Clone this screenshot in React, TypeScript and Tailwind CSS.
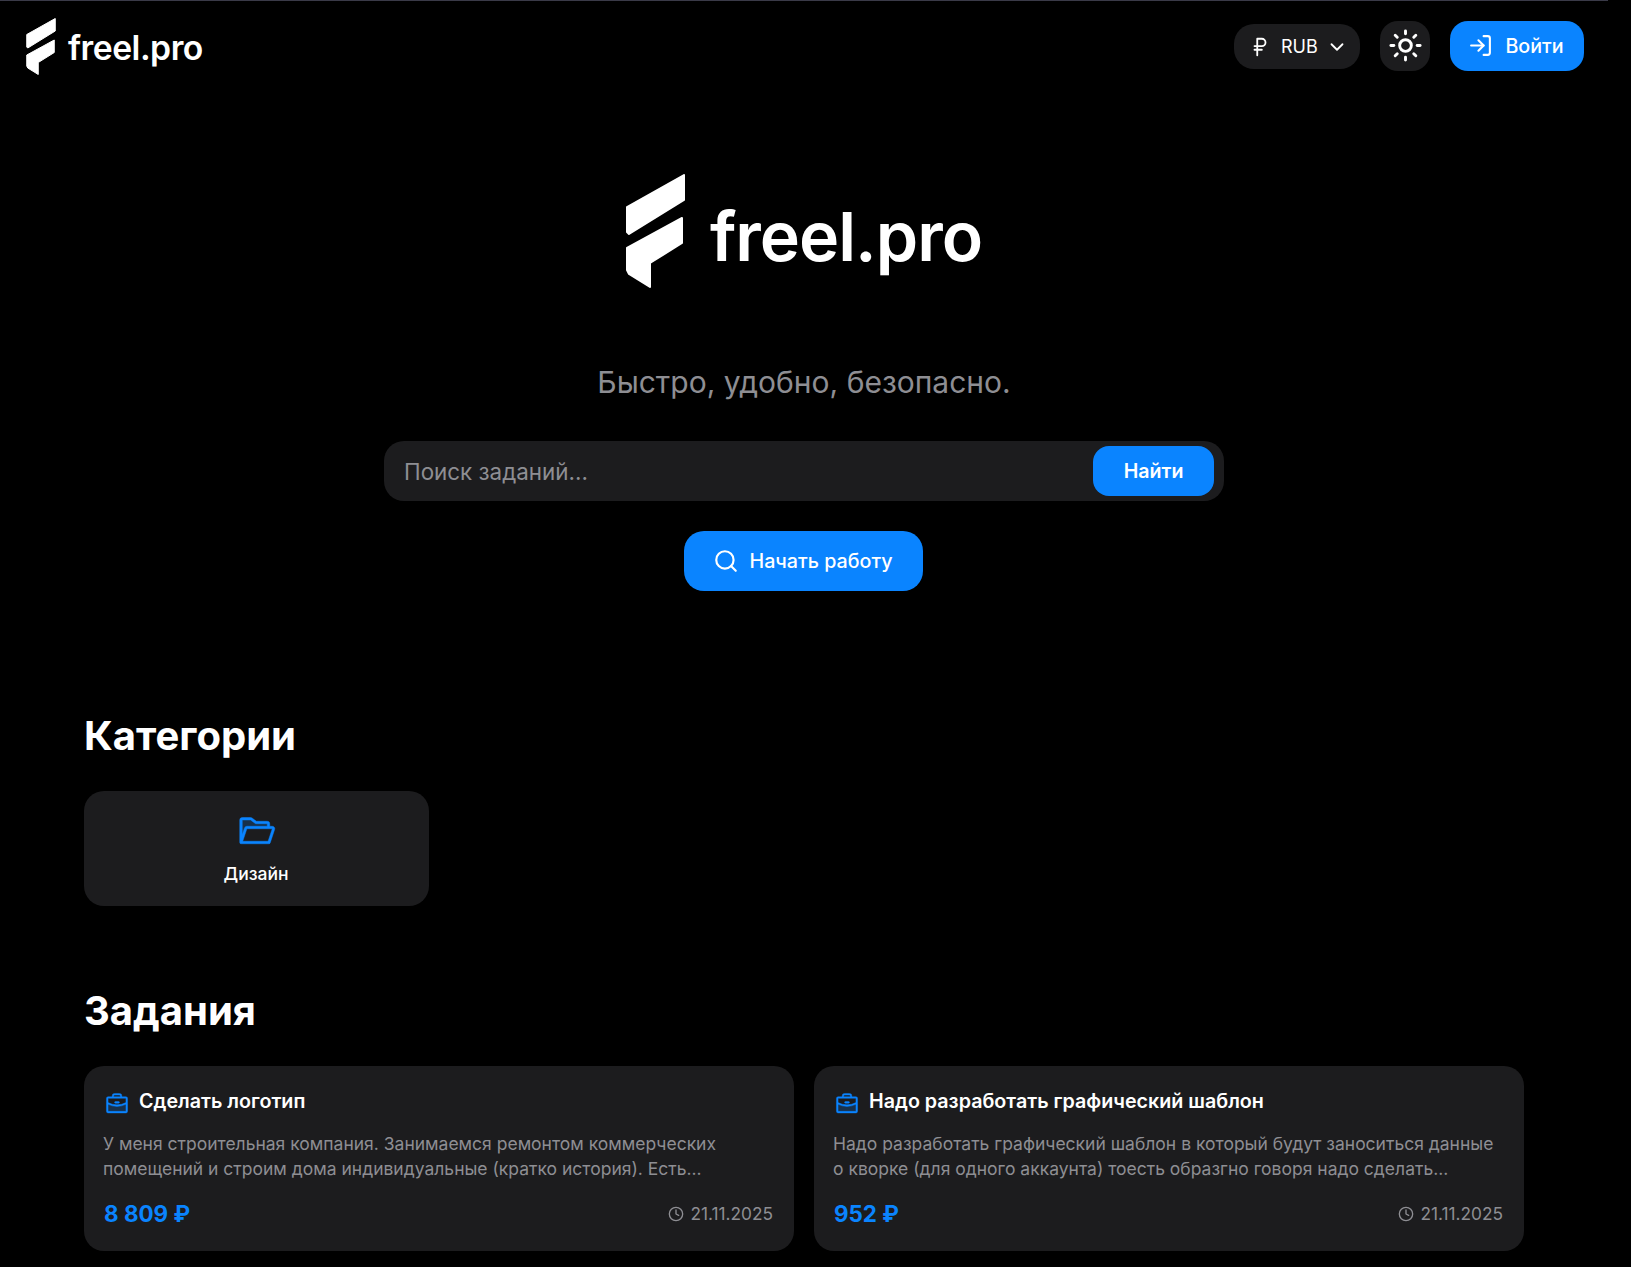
import { RussianRuble, ChevronDown, Sun, LogIn, Search, Clock } from "lucide-react";
import { PiFolderOpenDuotone, PiBriefcaseDuotone } from "react-icons/pi";

const tasks = [
  {
    title: "Сделать логотип",
    text: "У меня строительная компания. Занимаемся ремонтом коммерческих помещений и строим дома индивидуальные (кратко история). Есть...",
    price: "8 809 ₽",
    date: "21.11.2025",
  },
  {
    title: "Надо разработать графический шаблон",
    text: "Надо разработать графический шаблон в который будут заноситься данные о кворке (для одного аккаунта) тоесть образгно говоря надо сделать...",
    price: "952 ₽",
    date: "21.11.2025",
  },
];

function LogoMark({ className }: { className: string }) {
  return (
    <svg viewBox="0 0 59 114" className={className} fill="white" stroke="white" strokeWidth="2" strokeLinejoin="round">
      <path d="M1 33 L58 1 V26 L3 60 L1 58 Z" />
      <path d="M1 74 L56 44 V69 L24 89 V113 L3 100 L1 96 Z" />
    </svg>
  );
}

export default function App() {
  return (
    <div className="h-screen overflow-hidden bg-black font-['Inter',sans-serif] text-white">
      <div className="w-[1608px]">
        {/* Header */}
        <header className="flex h-[90px] items-center justify-between border-t border-[#3a3a48] pl-[26px] pr-6">
          <a className="mt-[2px] flex items-center gap-[12px]">
            <LogoMark className="h-[57px] w-[30px]" />
            <span className="mt-[2px] text-[33.7px] font-semibold leading-none tracking-[-0.5px]">freel.pro</span>
          </a>

          <div className="flex items-center gap-5">
            <button className="mt-[2px] flex h-[45px] w-[126px] items-center rounded-[20px] bg-[#1c1c1e] pl-[15px] text-lg">
              <RussianRuble size={22} />
              <span className="ml-[10px]">RUB</span>
              <ChevronDown size={22} className="ml-[8px]" />
            </button>
            <button className="flex h-[50px] w-[50px] items-center justify-center rounded-[18px] bg-[#1c1c1e]">
              <Sun size={35} />
            </button>
            <button className="flex h-[50px] w-[134px] items-center justify-center gap-3 rounded-[18px] bg-[#0a84ff] pr-[2px] text-[19.7px] font-medium">
              <LogIn size={25} />
              <span className="mt-[2px]">Войти</span>
            </button>
          </div>
        </header>

        {/* Hero */}
        <section className="flex flex-col items-center pt-[83px]">
          <div className="flex h-[116px] items-center gap-[25px]">
            <LogoMark className="h-[114px] w-[59px]" />
            <span className="mt-[10px] text-[68px] font-semibold leading-none tracking-[-1px]">freel.pro</span>
          </div>

          <p className="mt-[75px] text-[30px] leading-9 text-[#8e8e93]">Быстро, удобно, безопасно.</p>

          <div className="mt-[41px] flex h-[60px] w-[840px] items-center justify-between rounded-[20px] bg-[#1c1c1e] pl-5 pr-[10px]">
            <span className="mt-[1px] text-[22.4px] text-[#8e8e93]">Поиск заданий...</span>
            <button className="h-[50px] w-[121px] rounded-[16px] bg-[#0a84ff] pt-[1px] text-[19.6px] font-semibold">Найти</button>
          </div>

          <button className="mr-[2px] mt-[30px] flex h-[60px] w-[239px] items-center justify-center gap-[10px] rounded-[20px] bg-[#0a84ff] text-[19.7px] font-medium">
            <Search size={26} />
            <span className="mt-[1px]">Начать работу</span>
          </button>
        </section>

        <main className="px-[84px]">
          {/* Categories */}
          <h2 className="mt-[121px] text-[40px] font-bold leading-12">Категории</h2>
          <div className="mt-[31px] flex h-[115px] w-[345px] flex-col items-center justify-center rounded-[20px] bg-[#1c1c1e]">
            <PiFolderOpenDuotone size={40} strokeWidth={3} stroke="currentColor" className="mr-[2px] text-[#0a84ff]" />
            <span className="mr-[1px] mt-[11px] text-[17.5px] font-medium">Дизайн</span>
          </div>

          {/* Tasks */}
          <h2 className="mt-[81px] text-[40px] font-bold leading-12">Задания</h2>
          <div className="mt-[31px] grid grid-cols-2 gap-5">
            {tasks.map((task) => (
              <div key={task.title} className="flex h-[185px] flex-col rounded-[20px] bg-[#1c1c1e] px-[19px] pt-5">
                <div className="flex items-center gap-[9px]">
                  <PiBriefcaseDuotone size={26} strokeWidth={4} stroke="currentColor" className="ml-[1px] mt-[5px] text-[#0a84ff]" />
                  <h3 className="mb-[2px] text-[19.7px] font-semibold leading-7">{task.title}</h3>
                </div>
                <p className="mt-[14px] text-[17.5px] leading-[25px] text-[#8e8e93]">{task.text}</p>
                <div className="mt-[16px] flex items-center justify-between">
                  <span className="ml-[1px] text-[22.4px] font-bold text-[#0a84ff]">{task.price}</span>
                  <span className="mr-[2px] flex items-center gap-[6px] text-[17.3px] text-[#8e8e93]">
                    <Clock size={16} />
                    {task.date}
                  </span>
                </div>
              </div>
            ))}
          </div>
        </main>
      </div>
    </div>
  );
}
